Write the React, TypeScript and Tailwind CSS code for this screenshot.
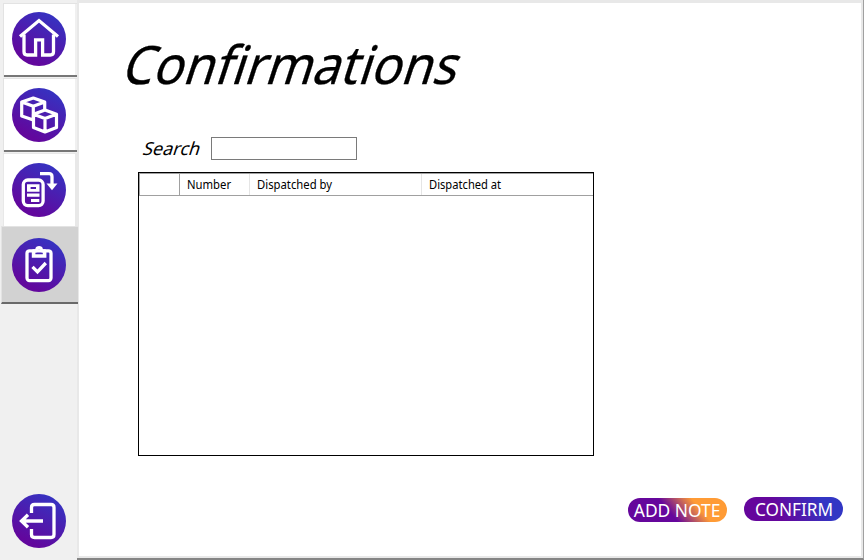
import type { ReactNode } from "react";

function Disc({ id, children }: { id: string; children: ReactNode }) {
  return (
    <svg width="54" height="54" viewBox="0 0 54 54" fill="none" className="block shrink-0">
      <defs>
        <linearGradient id={id} x1="0.3" y1="1" x2="0.85" y2="0.02">
          <stop offset="0.1" stopColor="#62079d" />
          <stop offset="1" stopColor="#3236c4" />
        </linearGradient>
      </defs>
      <circle cx="27" cy="27" r="27" fill={`url(#${id})`} />
      <g stroke="#fff" strokeWidth="3.3">{children}</g>
    </svg>
  );
}

function Tile({ children }: { children: ReactNode }) {
  return (
    <div className="ml-[3px] flex h-[74px] w-[74px] shrink-0 border-t border-l border-[#e3e3e3] bg-white">
      <div className="flex w-full border-b-2 border-b-[#777777]">
        <div className="flex w-full border-r-2 border-r-[#f0f0f0] pl-2">{children}</div>
      </div>
    </div>
  );
}

export default function App() {
  return (
    <div className="flex h-[560px] w-[864px] overflow-hidden bg-[#f0f0f0] font-['Noto_Sans','Open_Sans',sans-serif] text-black">
      <nav className="z-10 flex w-[77px] shrink-0 flex-col pt-[3px]">
        <div className="flex flex-col gap-px">
          <Tile>
            <div className="pt-2">
              <Disc id="home">
                <path d="M8 24.5 27 8.6 46 24.5" />
                <path d="M12 22.5V39.8Q12 43 15.2 43H23.6V27.8H30.6V43H38.3Q41.5 43 41.5 39.8V22.5" />
              </Disc>
            </div>
          </Tile>
          <Tile>
            <div className="pt-[9px]">
              <Disc id="boxes">
                <g strokeWidth="3.2" strokeLinejoin="round">
                  <path d="M21.3 32 9.7 28V14L21.3 10 32.7 14V21M9.7 14 21.3 18.2 32.7 14M21.3 18.2V32" />
                  <path d="M21.5 26.3 33 22 44.5 26.3V39.5L33 44 21.5 39.5ZM21.5 26.3 33 30.5 44.5 26.3M33 30.5V44" />
                </g>
              </Disc>
            </div>
          </Tile>
        </div>
        <div className="mt-px ml-[3px] flex h-[73px] w-[74px] shrink-0 border-t border-r-2 border-l border-[#e8e8e8] bg-white pt-[9px] pl-2">
          <Disc id="dispatch">
            <rect x="11.3" y="17" width="19.8" height="25.6" rx="4.5" />
            <path
              d="M15 21.2H27.5V28.7H15ZM18.6 24V26H24V24ZM15 30.5H27.5V33.7H15ZM19 36H27.3V39H19Z"
              fill="#fff"
              fillRule="evenodd"
              stroke="none"
            />
            <path d="M28 10.7H37Q40 10.7 40 13.7V22" />
            <path d="M34.5 20.5H45.5L40 27.3Z" fill="#fff" stroke="none" />
          </Disc>
        </div>
        <div className="ml-px flex h-[78px] w-[77px] shrink-0 border-t border-b-2 border-l border-t-[#e3e3e3] border-b-[#696969] border-l-[#e3e3e3] bg-[#d2d2d2] pt-[11px] pl-[10px]">
          <Disc id="confirm">
            <rect x="15" y="12.8" width="24" height="29.8" rx="2.5" />
            <path d="M21.6 12.5V18H32.6V12.5" strokeWidth="3.6" />
            <path d="M20.5 14.5V11.2H23.3C23.3 6.9 30.9 6.9 30.9 11.2H33.7V14.5H29.6C30.3 10.6 23.9 10.6 24.6 14.5Z" fill="#fff" stroke="none" />
            <path d="M20.5 28.8 25.5 33.8 33.8 25" />
          </Disc>
        </div>
        <div className="mt-auto mb-3 ml-3">
          <Disc id="leave">
            <path d="M19.5 19V13.5Q19.5 10.5 22.5 10.5H39Q42 10.5 42 13.5V40.5Q42 43.5 39 43.5H22.5Q19.5 43.5 19.5 40.5V35" />
            <path d="M31 27H10M16 20.8 9.5 27 16 33.2" />
          </Disc>
        </div>
      </nav>

      <div className="flex grow border-r border-b-2 border-r-[#a0a0a0] border-b-[#858585]">
        <main className="flex grow flex-col border-t-[3px] border-r-2 border-b-2 border-l-2 border-[#e8e8e8] bg-white">
          <h1 className="mt-[25px] ml-[40px] h-[72px] w-[330px] origin-[0_58px] -skew-x-[18deg] text-[53px] leading-[72px] whitespace-nowrap">
            <span className="inline-block origin-left scale-x-[0.945] [-webkit-text-stroke:0.3px_black]">
              Confirmations
            </span>
          </h1>
          <div className="mt-[35px] ml-[63px] flex h-[26px] items-center">
            <label className="w-[69px] pl-[2px]">
              <span className="inline-block origin-left -skew-x-[18deg] text-[18px] leading-[24px]">Search</span>
            </label>
            <input className="h-[23px] w-[146px] border border-[#7a7a7a] bg-white outline-none" />
          </div>
          <div className="mt-[11px] ml-[59px] h-[284px] w-[456px] shrink-0 border border-black">
            <div className="flex h-[23px] border-t border-b border-l border-[#a0a0a0] text-[12px] leading-[22px]">
              <div className="w-10 border-r border-[#a0a0a0]" />
              <div className="w-[70px] border-r border-[#e5e5e5] pl-[7px]">
                <span className="inline-block origin-left scale-x-[0.94]">Number</span>
              </div>
              <div className="w-[172px] border-r border-[#e5e5e5] pl-[7px]">
                <span className="inline-block origin-left scale-x-[0.94]">Dispatched by</span>
              </div>
              <div className="pl-[7px]">
                <span className="inline-block origin-left scale-x-[0.93]">Dispatched at</span>
              </div>
            </div>
          </div>
          <div className="mt-[41px] ml-[549px] flex gap-[17px] text-[18.5px] leading-[24px] text-white">
            <button className="mt-px flex h-6 w-[99px] items-center justify-center rounded-full bg-[linear-gradient(50deg,#65069c_42%,#ff9b35_70%)] whitespace-nowrap">
              <span className="inline-block scale-x-[0.94]">ADD NOTE</span>
            </button>
            <button className="flex h-6 w-[99px] items-center justify-center rounded-full bg-[linear-gradient(60deg,#65069c_35%,#3236c4_80%)] whitespace-nowrap">
              <span className="inline-block scale-x-[0.93]">CONFIRM</span>
            </button>
          </div>
        </main>
      </div>
    </div>
  );
}
